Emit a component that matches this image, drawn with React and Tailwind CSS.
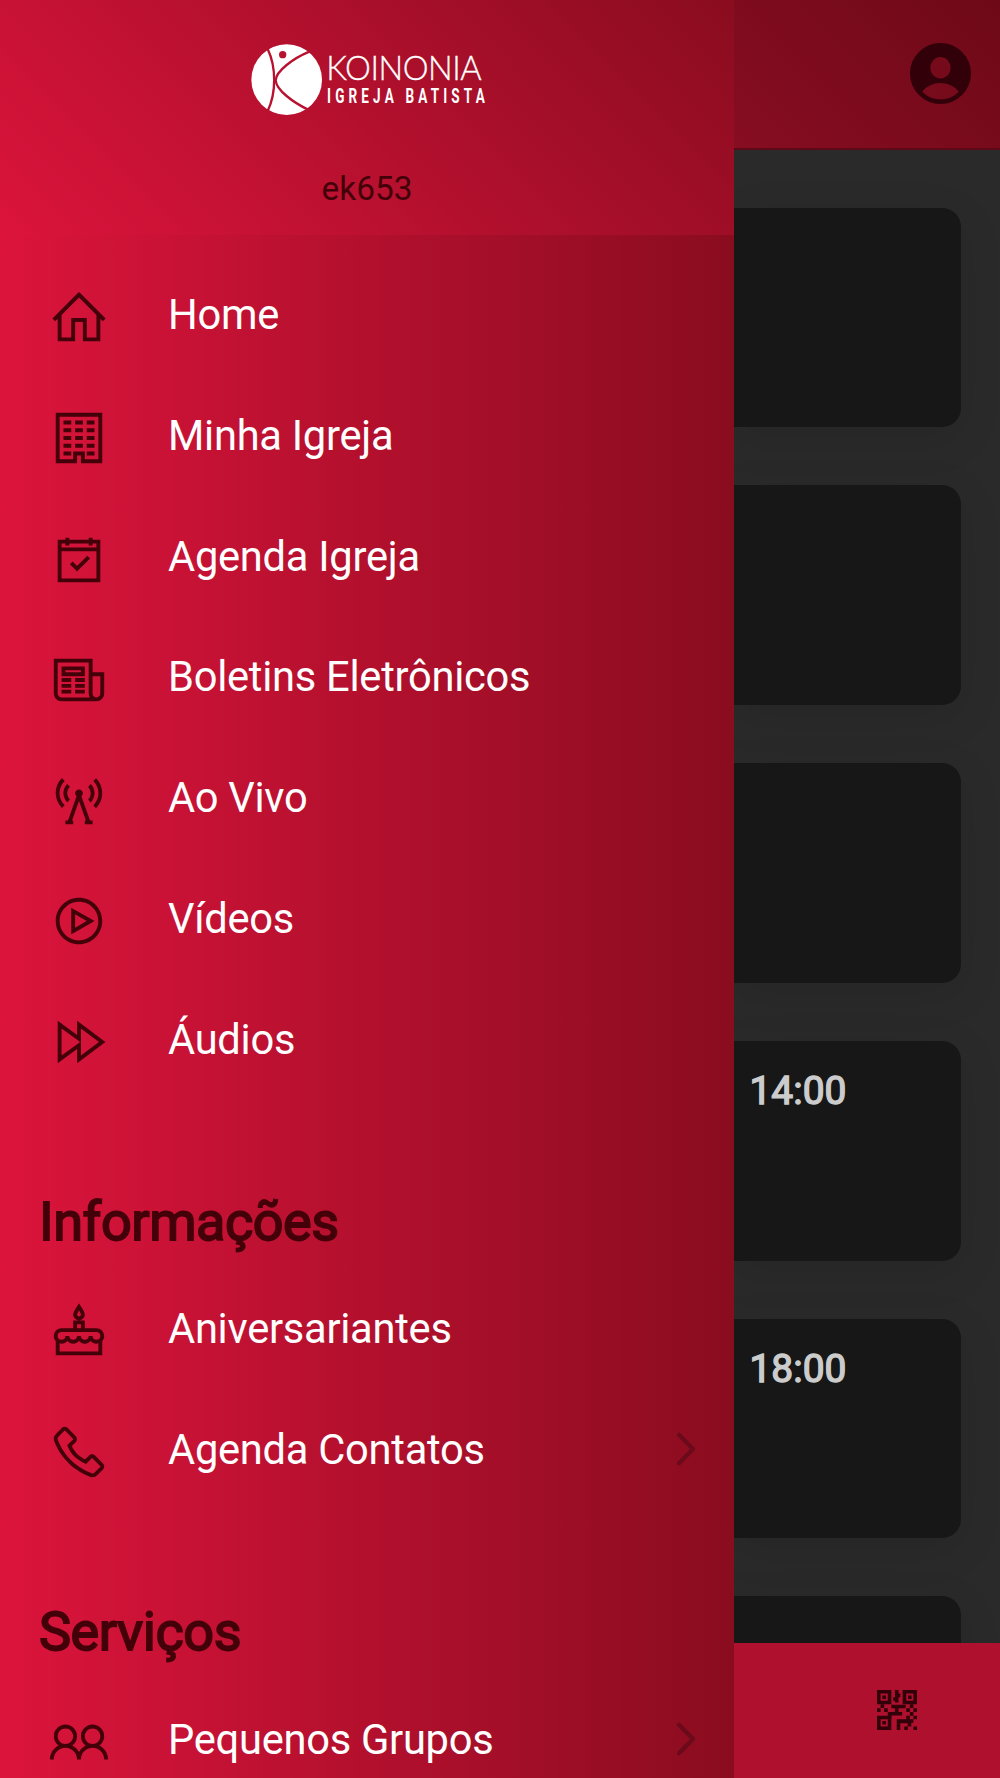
import React from "react";
import {
  LiaHomeSolid,
  LiaBuildingSolid,
  LiaCalendarCheckSolid,
  LiaNewspaperSolid,
  LiaBroadcastTowerSolid,
  LiaPlayCircleSolid,
  LiaForwardSolid,
  LiaBirthdayCakeSolid,
  LiaPhoneSolid,
  LiaUserFriendsSolid,
} from "react-icons/lia";

const mainItems = [
  { label: "Home", icon: LiaHomeSolid },
  { label: "Minha Igreja", icon: LiaBuildingSolid },
  { label: "Agenda Igreja", icon: LiaCalendarCheckSolid },
  { label: "Boletins Eletrônicos", icon: LiaNewspaperSolid },
  { label: "Ao Vivo", icon: LiaBroadcastTowerSolid },
  { label: "Vídeos", icon: LiaPlayCircleSolid },
  { label: "Áudios", icon: LiaForwardSolid },
];

const infoItems = [
  { label: "Aniversariantes", icon: LiaBirthdayCakeSolid },
  { label: "Agenda Contatos", icon: LiaPhoneSolid, more: true },
];

const serviceItems = [
  { label: "Pequenos Grupos", icon: LiaUserFriendsSolid, more: true },
];

const cards = ["", "", "", "14:00", "18:00", ""];

const Logo = () => (
  <svg viewBox="60 38 710 222" className="mt-[42.5px] ml-[250px] h-[74px] w-[236.7px]">
    <circle cx="170" cy="148" r="106" fill="#fff" />
    <g fill="none" stroke="#b8112f" strokeWidth="7">
      <path d="M113 56 C139 110 139 188 113 242" />
      <path d="M238 64 C190 84 138 122 137 150 C139 180 190 216 234 238" />
    </g>
    <circle cx="158" cy="73" r="11" fill="#b8112f" />
    <text
      x="289"
      y="148"
      fill="#fff"
      stroke="#fff"
      strokeWidth="1"
      fontSize="98"
      fontWeight="300"
      fontFamily="Lato, sans-serif"
      textLength="466"
      lengthAdjust="spacing"
    >
      KOINONIA
    </text>
    <text
      transform="translate(291 218) scale(0.7 1)"
      fill="#fff"
      fontSize="58"
      fontWeight="700"
      fontFamily="Roboto, sans-serif"
      textLength="676"
      lengthAdjust="spacing"
    >
      IGREJA BATISTA
    </text>
  </svg>
);

const Chevron = () => (
  <svg
    viewBox="0 0 22 36"
    className="mr-[37px] mb-[1px] ml-auto h-[36px] w-[22px] text-[#6b0a1b]"
    fill="none"
    stroke="currentColor"
    strokeWidth="4.2"
    strokeLinecap="round"
    strokeLinejoin="round"
  >
    <path d="M4 3.8 L18 18 L4 32.2" />
  </svg>
);

const ProfileIcon = () => (
  <svg viewBox="0 0 61 61" className="h-[61px] w-[61px] text-[#320009]">
    <path
      fill="currentColor"
      fillRule="evenodd"
      d="M30.5 0a30.5 30.5 0 1 0 0 61a30.5 30.5 0 1 0 0-61zM30.5 14a10.2 10.7 0 1 1 0 21.4a10.2 10.7 0 1 1 0-21.4zM12.3 48.5C17 43 23 40 30.5 40S44 43 48.7 48.5C44.5 53.6 38 56.3 30.5 56.3S16.5 53.6 12.3 48.5z"
    />
  </svg>
);

const QrIcon = () => (
  <svg viewBox="0 0 22.3 22.3" className="h-[40px] w-[40px] text-[#320009]">
    <g fill="none" stroke="currentColor" strokeWidth="2">
      <path d="M1 1h6v6h-6zM15.3 1h6v6h-6zM1 15.3h6v6h-6z" />
    </g>
    <path
      fill="currentColor"
      d="M3 3h2v2h-2zM17.3 3h2v2h-2zM3 17.3h2v2h-2z
      M10 0h2v2h1v2h-1v3h-2v-1h-1v-2h1z
      M2 8h2v2h-2zM8 8.2h8v2h-4v2h2v2h-6v2h-2v-4h4v-2h-2zM18.3 8h2v2h-2z
      M0 10.2h2v2h-2zM4 10.2h2v2h-2zM16.3 10.2h2v2h-2zM20.3 10.2h2v2h-2z
      M18.3 12.3h2v2h-2zM16.3 14.3h2v2h2v2h-1.2v2h-2v-1.7h-4.1v3.7h-2v-6h5.3z
      M20.3 14.3h2v2h-2zM15.2 20.3h2v2h-2zM20.3 20.3h2v2h-2z"
    />
  </svg>
);

const MenuItem = ({ label, icon: Icon, more }) => (
  <li className="flex h-[120.75px] items-center">
    <Icon className="mt-[5px] ml-[47.7px] h-[62px] w-[62px] shrink-0 text-[#430009]" />
    <span className="ml-[58.3px] text-[41.67px] leading-none tracking-[-0.27px] whitespace-nowrap text-white">
      {label}
    </span>
    {more && <Chevron />}
  </li>
);

const MenuHeading = ({ children }) => (
  <h2 className="flex h-[168.8px] items-end pb-[19px] pl-[39px] text-[54px] leading-[56px] font-normal tracking-[-0.45px] text-[#430009] [-webkit-text-stroke:1.8px_#430009]">
    {children}
  </h2>
);

const App = () => {
  return (
    <div className="flex h-[1778px] w-[1000px] overflow-hidden bg-[#2a2a2a] font-[Roboto,sans-serif]">
      {/* Side menu */}
      <aside className="flex w-[734px] shrink-0 flex-col overflow-hidden bg-linear-[90deg,#dc143c,#8a0c1f]">
        <header className="h-[234.6px] shrink-0 bg-linear-[45deg,#dc143c,#8a0c1f]">
          <Logo />
          <p className="mt-[52.5px] text-center text-[33.33px] leading-[40px] text-[#430009]">
            ek653
          </p>
        </header>

        <nav className="pt-[20.1px]">
          <ul>
            {mainItems.map((item) => (
              <MenuItem key={item.label} {...item} />
            ))}
          </ul>
          <MenuHeading>Informações</MenuHeading>
          <ul>
            {infoItems.map((item) => (
              <MenuItem key={item.label} {...item} />
            ))}
          </ul>
          <MenuHeading>Serviços</MenuHeading>
          <ul>
            {serviceItems.map((item) => (
              <MenuItem key={item.label} {...item} />
            ))}
          </ul>
        </nav>
      </aside>

      {/* Page behind the menu */}
      <div className="flex min-w-0 flex-1 flex-col">
        <header className="flex h-[149.6px] shrink-0 items-start justify-end border-b-[2.4px] border-[#5e0918] bg-linear-[45deg,#870d22,#6e0917] pt-[43px] pr-[29px]">
          <ProfileIcon />
        </header>

        <main className="flex min-h-0 flex-1 flex-col gap-[58px] overflow-hidden pt-[58.2px] pr-[39px]">
          {cards.map((time, index) => (
            <div
              key={index}
              className="h-[219.7px] shrink-0 rounded-r-[19px] bg-[#171717] pt-[27px] pl-[15.5px] text-[38.9px] leading-[46px] text-[#cccccc] shadow-[0_11px_44px_rgba(0,0,0,0.1)] [-webkit-text-stroke:1.4px_#cccccc]"
            >
              {time}
            </div>
          ))}
        </main>

        <footer className="flex h-[135.4px] shrink-0 items-center justify-end bg-[#ae102e] pr-[83px]">
          <QrIcon />
        </footer>
      </div>
    </div>
  );
};

export default App;
